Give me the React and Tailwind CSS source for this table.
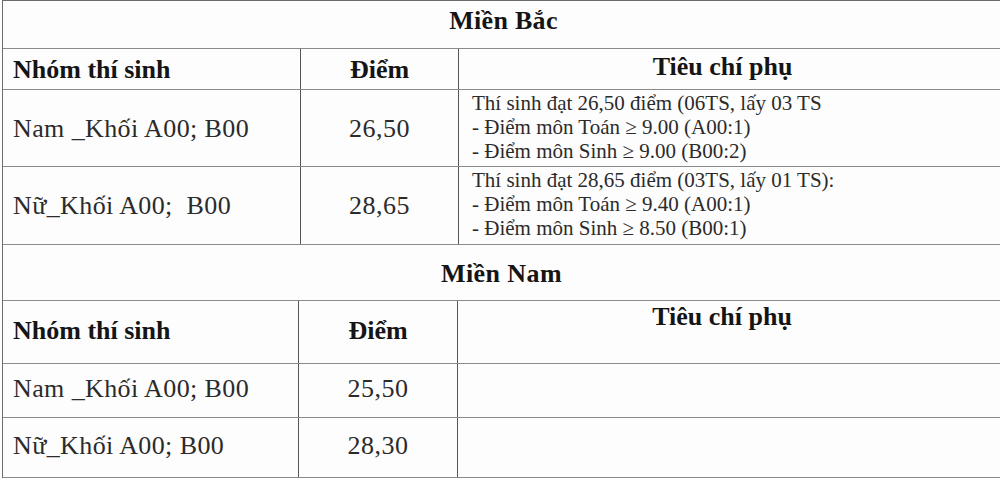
import React from 'react';

const northRows = [
  {
    group: 'Nam _Khối A00; B00',
    score: '26,50',
    notes: [
      'Thí sinh đạt 26,50 điểm (06TS, lấy 03 TS',
      '- Điểm môn Toán ≥ 9.00 (A00:1)',
      '- Điểm môn Sinh ≥ 9.00 (B00:2)'
    ]
  },
  {
    group: 'Nữ_Khối A00;  B00',
    score: '28,65',
    notes: [
      'Thí sinh đạt 28,65 điểm (03TS, lấy 01 TS):',
      '- Điểm môn Toán ≥ 9.40 (A00:1)',
      '- Điểm môn Sinh ≥ 8.50 (B00:1)'
    ]
  }
];

const southRows = [
  { group: 'Nam _Khối A00; B00', score: '25,50', notes: [] },
  { group: 'Nữ_Khối A00; B00', score: '28,30', notes: [] }
];

function App() {
  return (
    <div className="w-[1000px] h-[479px] overflow-hidden bg-[#fdfdfd] text-[#2b2b2b] font-['Liberation_Serif',serif]">
      <div className="ml-[2px] border-l border-t border-[#6b6b6b]">
        {/* Miền Bắc */}
        <div className="h-[48px] border-b border-[#8a8a8a] pt-[5px] text-center">
          <span className="inline-block pl-[4px] text-[26px] leading-[30px] font-bold tracking-[0.3px] text-[#151515]">Miền Bắc</span>
        </div>

        <div className="grid grid-cols-[298px_158px_1fr] h-[41px] border-b border-[#8a8a8a]">
          <div className="border-r border-[#555] pl-[10px] pt-[6px] text-[26px] leading-[30px] font-bold text-[#151515]">Nhóm thí sinh</div>
          <div className="border-r border-[#555] pt-[6px] text-center text-[26px] leading-[30px] font-bold text-[#151515]">Điểm</div>
          <div className="pt-[3px] pr-[14px] text-center text-[26px] leading-[30px] font-bold text-[#151515]">Tiêu chí phụ</div>
        </div>

        {northRows.map((row, i) => (
          <div
            key={row.score}
            className={i === 0 ? 'grid grid-cols-[298px_158px_1fr] h-[77px] border-b border-[#8a8a8a]' : 'grid grid-cols-[298px_158px_1fr] h-[78px] border-b border-[#8a8a8a]'}
          >
            <div className="border-r border-[#555] pl-[10px] pt-[24px] text-[26px] leading-[30px] tracking-[0.4px] whitespace-pre">{row.group}</div>
            <div className="border-r border-[#555] pt-[24px] text-center text-[26px] leading-[30px] tracking-[0.5px]">{row.score}</div>
            <div className="pl-[13px] pt-[1px] text-[21px] leading-[24px]">
              {row.notes.map((line) => (
                <div key={line}>{line}</div>
              ))}
            </div>
          </div>
        ))}

        {/* Miền Nam */}
        <div className="h-[56px] border-b border-[#8a8a8a] pt-[14px] text-center">
          <span className="inline-block text-[26px] leading-[30px] font-bold tracking-[0.4px] text-[#151515]">Miền Nam</span>
        </div>

        <div className="grid grid-cols-[296px_159px_1fr] h-[63px] border-b border-[#8a8a8a]">
          <div className="border-r border-[#555] pl-[10px] pt-[15px] text-[26px] leading-[30px] font-bold text-[#151515]">Nhóm thí sinh</div>
          <div className="border-r border-[#555] pt-[15px] text-center text-[26px] leading-[30px] font-bold text-[#151515]">Điểm</div>
          <div className="pt-[1px] pr-[14px] text-center text-[26px] leading-[30px] font-bold text-[#151515]">Tiêu chí phụ</div>
        </div>

        {southRows.map((row, i) => (
          <div
            key={row.score}
            className={i === 0 ? 'grid grid-cols-[296px_159px_1fr] h-[54px] border-b border-[#8a8a8a]' : 'grid grid-cols-[296px_159px_1fr] h-[60px] border-b border-[#8a8a8a]'}
          >
            <div className={i === 0 ? 'border-r border-[#555] pl-[10px] pt-[10px] text-[26px] leading-[30px] tracking-[0.4px]' : 'border-r border-[#555] pl-[10px] pt-[13px] text-[26px] leading-[30px] tracking-[0.4px]'}>{row.group}</div>
            <div className={i === 0 ? 'border-r border-[#555] pt-[10px] text-center text-[26px] leading-[30px] tracking-[0.5px]' : 'border-r border-[#555] pt-[13px] text-center text-[26px] leading-[30px] tracking-[0.5px]'}>{row.score}</div>
            <div />
          </div>
        ))}
      </div>
    </div>
  );
}

export default App;
